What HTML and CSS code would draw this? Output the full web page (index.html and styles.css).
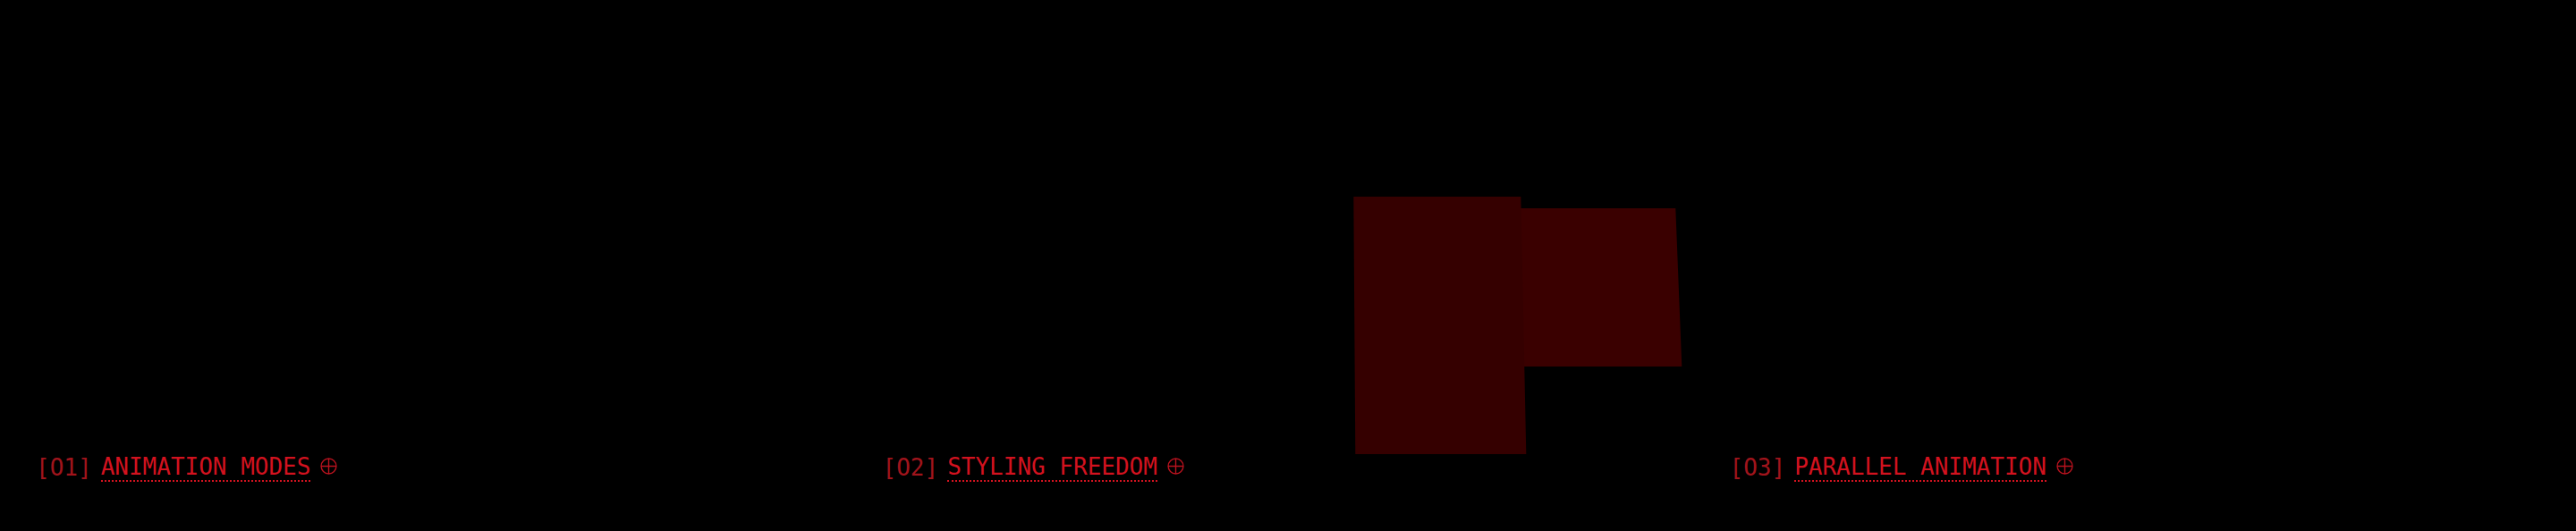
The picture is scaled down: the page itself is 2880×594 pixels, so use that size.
FILE: index.html
```html
<!DOCTYPE html>
<html lang="en">
<head>
<meta charset="utf-8">
<title>Features</title>
<link rel="stylesheet" href="styles.css">
</head>
<body>
<main class="features">
  <section class="card">
    <div class="stage"></div>
    <div class="label">
      <span class="num">[O1]</span>
      <span class="title">ANIMATION MODES</span>
      <svg class="icon" viewBox="0 0 18 18" width="19" height="19"><circle cx="9" cy="9" r="8" /><path d="M9 1V17M1 9H17" /></svg>
    </div>
  </section>
  <section class="card">
    <div class="stage">
      <svg class="shapes" viewBox="0 0 907 472" width="907" height="472">
        <polygon class="shape-b" points="700,199 886.3,199 893.3,376 700,376" />
        <polygon class="shape-a" points="526.3,186 713.3,186 719.3,474 528.3,474" />
      </svg>
    </div>
    <div class="label">
      <span class="num">[O2]</span>
      <span class="title">STYLING FREEDOM</span>
      <svg class="icon" viewBox="0 0 18 18" width="19" height="19"><circle cx="9" cy="9" r="8" /><path d="M9 1V17M1 9H17" /></svg>
    </div>
  </section>
  <section class="card">
    <div class="stage"></div>
    <div class="label">
      <span class="num">[O3]</span>
      <span class="title">PARALLEL ANIMATION</span>
      <svg class="icon" viewBox="0 0 18 18" width="19" height="19"><circle cx="9" cy="9" r="8" /><path d="M9 1V17M1 9H17" /></svg>
    </div>
  </section>
</main>
</body>
</html>
```
FILE: styles.css
```css
html, body {
  margin: 0;
  padding: 0;
  background: #000;
}
body {
  width: 2880px;
  height: 594px;
  overflow: hidden;
  font-family: "DejaVu Sans Mono", "Liberation Mono", monospace;
}
.features {
  display: grid;
  grid-template-columns: repeat(3, 1fr);
  column-gap: 40px;
  padding: 34px 40px 0;
}
.card {
  display: flex;
  flex-direction: column;
}
.stage {
  height: 472px;
  position: relative;
}
.shapes {
  display: block;
  overflow: visible;
}
.shape-a {
  fill: #350000;
}
.shape-b {
  fill: #3a0000;
}
.label {
  display: flex;
  align-items: center;
  font-size: 26px;
  line-height: 32px;
  margin-top: 1px;
}
.num {
  color: #a0141c;
  margin-right: 10px;
}
.title {
  color: #d2121f;
  line-height: 30px;
  border-bottom: 2px dotted #d2121f;
}
.icon {
  margin-left: 11px;
  margin-top: -4px;
  fill: none;
  stroke: #b8121e;
  stroke-width: 1.3;
}
```
